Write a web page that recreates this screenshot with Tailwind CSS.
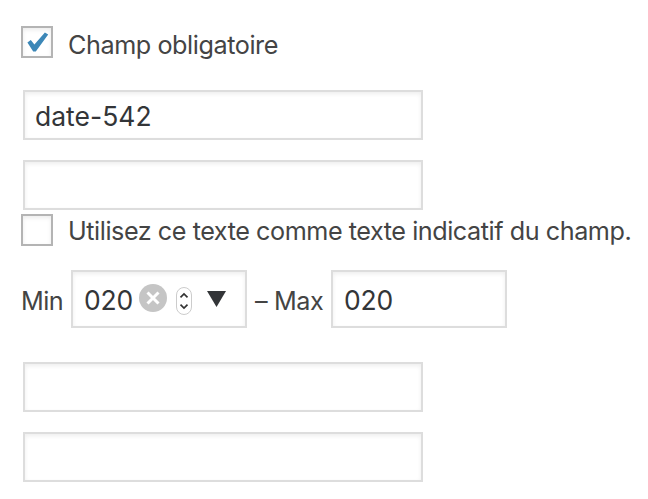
<!DOCTYPE html>
<html lang="fr">
<head>
<meta charset="utf-8">
<title>Champ date</title>
<script src="https://cdn.jsdelivr.net/npm/@tailwindcss/browser@4"></script>
</head>
<body class="bg-white">
<form class="flex h-[499px] w-[648px] flex-col items-start overflow-hidden pt-[26px] pl-[21px] font-['Inter',sans-serif] text-[25.2px] leading-8 whitespace-nowrap text-[#444]">
  <label class="flex h-8 items-center">
    <span class="flex size-8 items-center justify-center border-2 border-[#b4b4b4] shadow-[inset_0_2px_4px_rgba(0,0,0,0.08)]">
      <svg class="size-7 shrink-0" viewBox="0 0 28 28" fill="none"><path d="M4.4 14.4 7.8 12 11.4 16.6 21.9 4.4 25.2 6.6 12.8 23.6 10.2 23.6Z" fill="#3c87b7"/></svg>
    </span>
    <span class="ml-[15px] pt-[6px] tracking-[-0.43px]">Champ obligatoire</span>
  </label>
  <div class="mt-8 ml-[2px] flex h-[50px] w-[400px] items-center border-2 border-[#ddd] pt-[2px] pl-[10px] text-[26.5px] tracking-[0px] text-[#333538] shadow-[inset_0_2px_4px_rgba(0,0,0,0.07)]"><span>date-542</span></div>
  <div class="mt-5 ml-[2px] h-[50px] w-[400px] border-2 border-[#ddd] shadow-[inset_0_2px_4px_rgba(0,0,0,0.07)]"></div>
  <label class="mt-1 flex h-8 items-center">
    <span class="size-8 border-2 border-[#b4b4b4] shadow-[inset_0_2px_4px_rgba(0,0,0,0.08)]"></span>
    <span class="ml-[15px] pt-[2px] tracking-[-0.45px]">Utilisez ce texte comme texte indicatif du champ.</span>
  </label>
  <div class="mt-6 flex h-[58px] items-center">
    <span class="w-[50px] pt-[3px] tracking-[-0.55px]">Min</span>
    <div class="flex h-[58px] w-[176px] items-center border-2 border-[#ddd] pl-[11px] shadow-[inset_0_2px_4px_rgba(0,0,0,0.07)]">
      <span class="w-[55px] pt-[2px] text-[26.5px] tracking-[-0.2px] text-[#333538]">020</span>
      <svg class="-mt-[2px] size-7" viewBox="0 0 28 28"><circle cx="14" cy="14" r="14" fill="#c5c5c5"/><path d="M8.5 8.5 19.5 19.5M19.5 8.5 8.5 19.5" stroke="#fff" stroke-width="3"/></svg>
      <svg class="mt-[3px] ml-[9px] h-[28px] w-4" viewBox="0 0 16 28" fill="none"><rect x=".5" y=".5" width="15" height="27" rx="7.5" fill="#fff" stroke="#ccc"/><path d="M4.5 10.3 8 7 11.5 10.3M4.5 17.7 8 21 11.5 17.7" stroke="#333" stroke-width="1.7"/></svg>
      <svg class="-mt-[1px] ml-[15px] h-4 w-[19px]" viewBox="0 0 19 16"><path d="M0 0H19L9.5 16Z" fill="#333538"/></svg>
    </div>
    <span class="w-[84px] pt-[3px] pl-2 tracking-[-0.4px]">– Max</span>
    <div class="flex h-[58px] w-[176px] items-center border-2 border-[#ddd] pt-[2px] pl-[11px] text-[26.5px] tracking-[-0.2px] text-[#333538] shadow-[inset_0_2px_4px_rgba(0,0,0,0.07)]"><span>020</span></div>
  </div>
  <div class="mt-[34px] ml-[2px] h-[50px] w-[400px] border-2 border-[#ddd] shadow-[inset_0_2px_4px_rgba(0,0,0,0.07)]"></div>
  <div class="mt-5 ml-[2px] h-[50px] w-[400px] border-2 border-[#ddd] shadow-[inset_0_2px_4px_rgba(0,0,0,0.07)]"></div>
</form>
</body>
</html>
